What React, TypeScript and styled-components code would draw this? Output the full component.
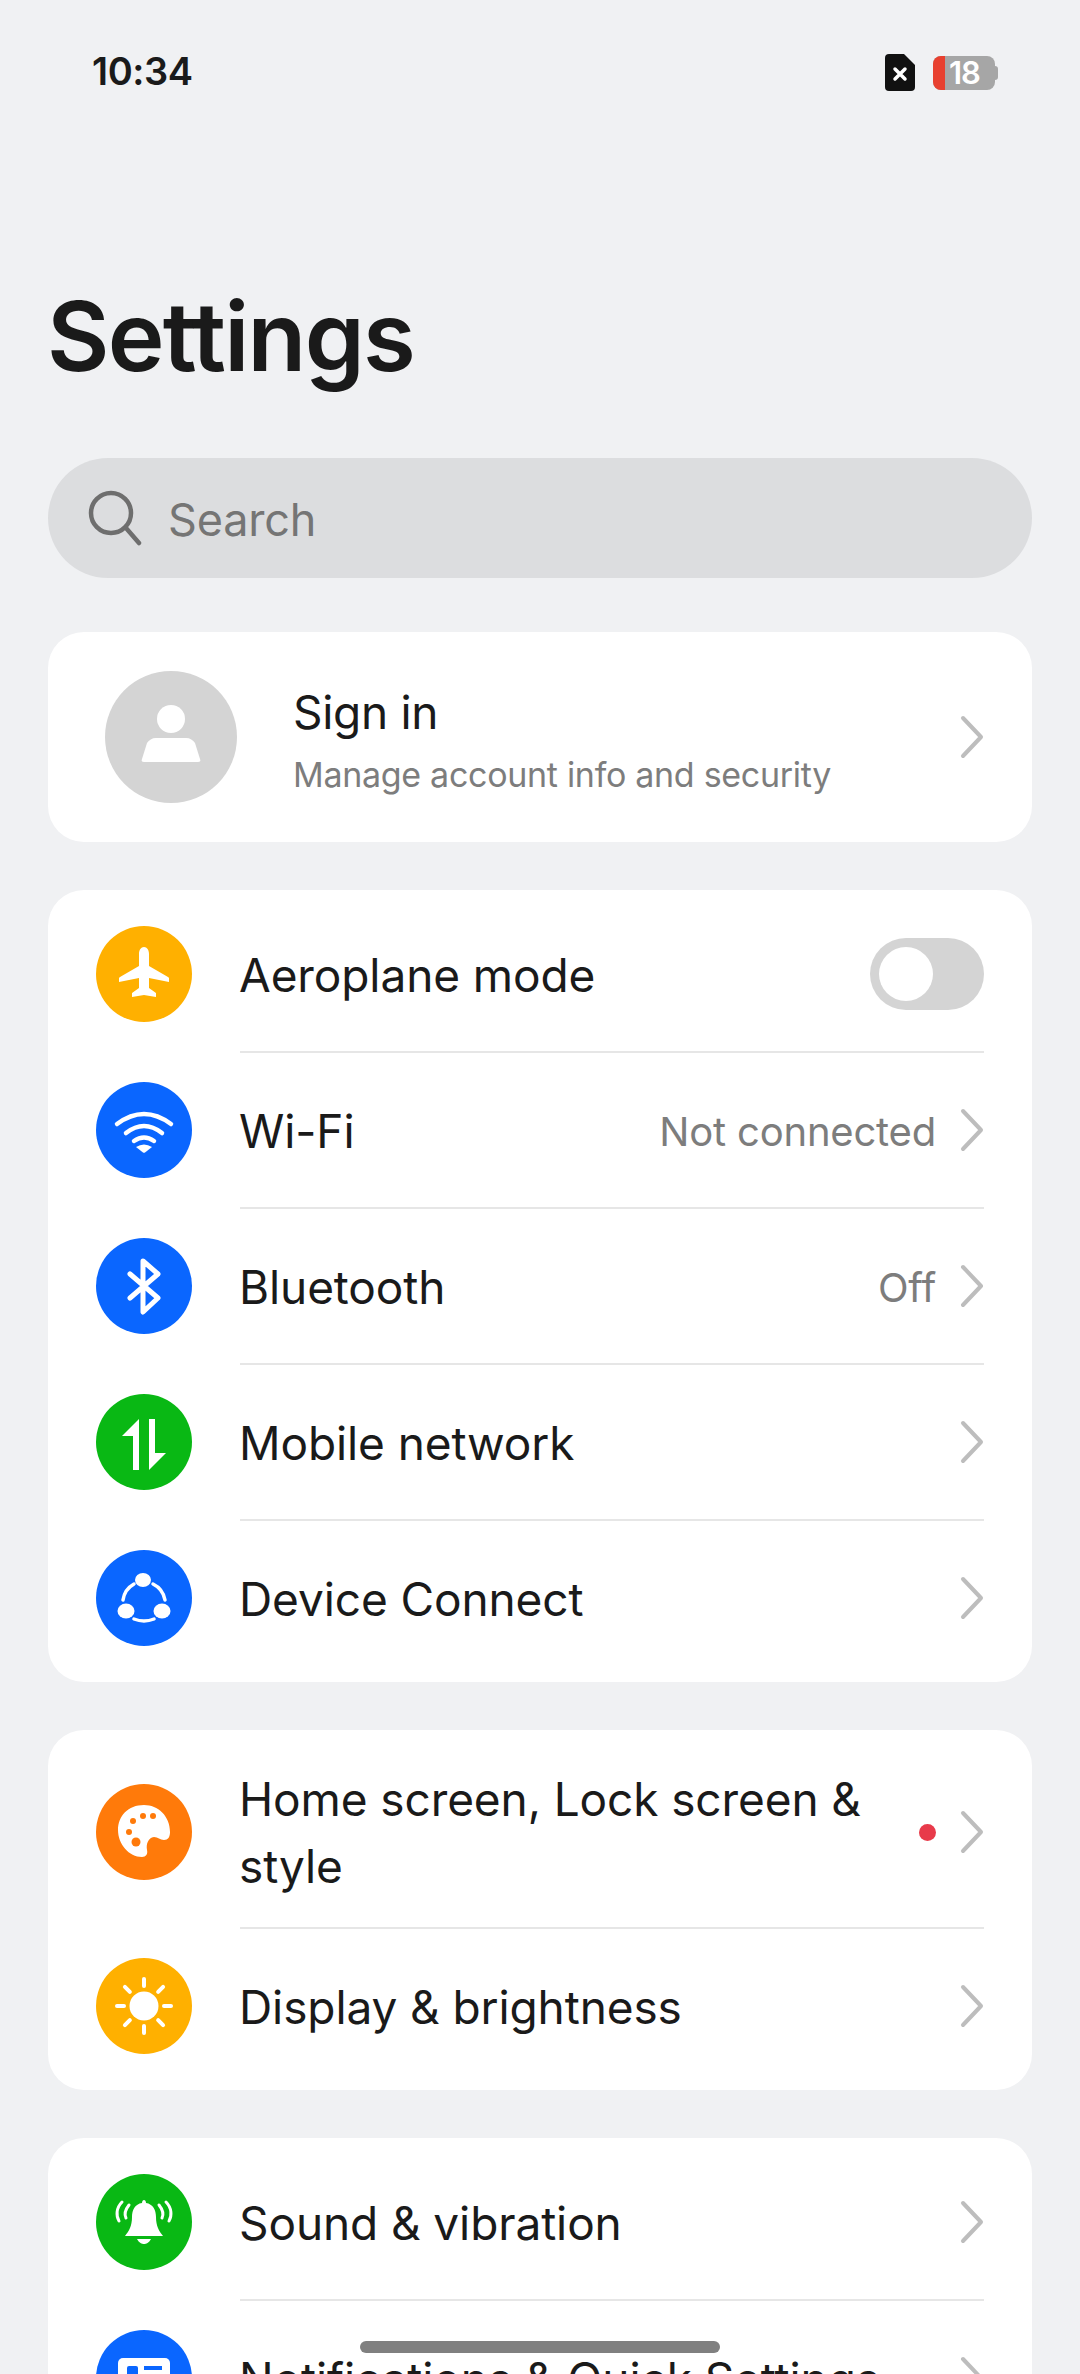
import React from "react"
import styled, { createGlobalStyle } from "styled-components"

const GlobalStyle = createGlobalStyle`
	html, body {
		margin: 0;
		padding: 0;
		background: #f0f1f3;
	}
	* {
		box-sizing: border-box;
	}
`

const Page = styled.div`
	position: relative;
	width: 1080px;
	height: 2374px;
	overflow: hidden;
	padding: 0 48px;
	background: #f0f1f3;
	color: #1a1a1a;
	font-family: Inter, "Liberation Sans", sans-serif;
`

const StatusBar = styled.div`
	display: flex;
	align-items: center;
	justify-content: space-between;
	height: 144px;
	padding: 0 34px 0 44px;
`

const Time = styled.span`
	margin-top: -2px;
	font-size: 38px;
	font-weight: 600;
	letter-spacing: -0.4px;
`

const StatusIcons = styled.div`
	display: flex;
	align-items: center;
	gap: 18px;
`

const BatteryWrap = styled.div`
	display: flex;
	align-items: center;
	margin-top: 2px;
`

const Battery = styled.div`
	display: flex;
	width: 62px;
	height: 34px;
	border-radius: 8px;
	background: #a6a6a6;
`

const BatteryLow = styled.div`
	width: 12px;
	border-radius: 8px 0 0 8px;
	background: #e8402f;
`

const BatteryLevel = styled.span`
	padding-left: 4px;
	font-size: 31px;
	font-weight: 600;
	line-height: 34px;
	letter-spacing: -1px;
	color: #fff;
`

const BatteryTip = styled.div`
	width: 3px;
	height: 14px;
	border-radius: 0 3px 3px 0;
	background: #a6a6a6;
`

const Title = styled.h1`
	margin: 134px 0 0 -1px;
	font-size: 96px;
	font-weight: 600;
	line-height: 116px;
	letter-spacing: -1.7px;
`

const SearchBar = styled.div`
	display: flex;
	align-items: center;
	gap: 24px;
	height: 120px;
	margin-top: 64px;
	padding-left: 40px;
	border-radius: 60px;
	background: #dcdddf;
`

const SearchText = styled.span`
	padding-top: 2px;
	font-size: 45px;
	letter-spacing: -0.2px;
	color: #757575;
`

const Card = styled.div`
	margin-top: 48px;
	padding: 7px 0 5px;
	border-radius: 36px;
	background: #fff;
`

const AccountCard = styled(Card)`
	display: flex;
	align-items: center;
	height: 210px;
	margin-top: 54px;
	padding: 0 48px 0 57px;
`

const Avatar = styled.div`
	display: flex;
	flex: none;
	align-items: center;
	justify-content: center;
	width: 132px;
	height: 132px;
	margin-right: 56px;
	border-radius: 50%;
	background: #d4d4d4;
`

const AccountText = styled.div`
	flex: 1;
	padding-top: 12px;
`

const AccountName = styled.div`
	font-size: 46px;
	font-weight: 430;
	line-height: 62px;
	letter-spacing: -0.3px;
`

const AccountHint = styled.div`
	margin-top: 1px;
	font-size: 34px;
	line-height: 62px;
	letter-spacing: -0.3px;
	color: #7d7d7d;
`

const Row = styled.div`
	display: flex;
	align-items: center;
	padding-left: 48px;
`

const IconCircle = styled.div<{ $color: string }>`
	flex: none;
	width: 96px;
	height: 96px;
	margin: -3px 48px 0 0;
	border-radius: 50%;
	background: ${(props) => props.$color};
`

const RowBody = styled.div<{ $tall?: boolean; $last?: boolean }>`
	display: flex;
	flex: 1;
	align-items: center;
	min-height: ${(props) => (props.$tall ? "192px" : "156px")};
	margin-right: 48px;
	border-bottom: 2px solid ${(props) => (props.$last ? "transparent" : "#e6e6e6")};
`

const Label = styled.div<{ $wrap?: boolean }>`
	flex: 1;
	margin-left: -1px;
	padding-top: 2px;
	font-size: 46px;
	font-weight: 430;
	line-height: 67px;
	letter-spacing: -0.1px;
	${(props) => props.$wrap && "max-width: 650px;"}
`

const Value = styled.span`
	margin-right: 24px;
	padding-top: 2px;
	font-size: 40px;
	letter-spacing: -0.2px;
	color: #7d7d7d;
`

const Dot = styled.span`
	width: 17px;
	height: 17px;
	margin: 0 24px 0 auto;
	border-radius: 50%;
	background: #e83a4a;
`

const Toggle = styled.div`
	display: flex;
	align-items: center;
	width: 114px;
	height: 72px;
	padding-left: 9px;
	border-radius: 36px;
	background: #d4d4d4;
`

const Knob = styled.div`
	width: 54px;
	height: 54px;
	border-radius: 50%;
	background: #fff;
`

const HomeBar = styled.div`
	position: absolute;
	left: 360px;
	top: 2341px;
	width: 360px;
	height: 12px;
	border-radius: 6px;
	background: #808080;
`

const PersonIcon = styled.svg`
	margin-bottom: 6px;
`

const BLUE = "#0a66ff"
const GREEN = "#09b814"
const AMBER = "#ffb000"
const ORANGE = "#ff7a0a"

const Glyph: React.FC<{ children: React.ReactNode }> = ({ children }) => (
	<svg width="96" height="96" viewBox="0 0 96 96" fill="#fff">
		{children}
	</svg>
)

const Chevron = () => (
	<svg width="24" height="44" viewBox="0 0 24 44" fill="none" style={{ flex: "none" }}>
		<path d="M3 3L21 22L3 41" stroke="#bdbdbd" strokeWidth="4" strokeLinecap="round" strokeLinejoin="round" />
	</svg>
)

const line = { fill: "none", stroke: "#fff", strokeLinecap: "round" as const, strokeLinejoin: "round" as const }

const PlaneIcon = () => (
	<Glyph>
		<path d="M48 21c-3 0-5 3-5 7v12L24 51c-1 .6-1 1-1 2v3l20-4v10l-7 5v4l12-2 12 2v-4l-7-5V52l20 4v-3c0-1 0-1.400-1-2L53 40V28c0-4-2-7-5-7z" />
	</Glyph>
)

const WifiIcon = () => (
	<Glyph>
		<g {...line} strokeWidth="4.5">
			<path d="M21 42Q48 22 75 42" />
			<path d="M30 51Q48 37 66 51" />
			<path d="M38 59Q48 52 58 59" />
		</g>
		<path d="M40 65Q48 60 56 65L49 70.500Q48 71.200 47 70.500Z" />
	</Glyph>
)

const BluetoothIcon = () => (
	<Glyph>
		<path {...line} strokeWidth="5" d="M34 36L62 60L47 74V23L62 36L34 60" />
	</Glyph>
)

const NetworkIcon = () => (
	<Glyph>
		<path d="M43 25V76H37V42H26Z" />
		<path d="M53 25H59V59H70L53 76Z" />
	</Glyph>
)

const ConnectIcon = () => (
	<Glyph>
		<ellipse cx="47" cy="30" rx="8" ry="7" />
		<ellipse cx="30" cy="61" rx="8.500" ry="7.500" />
		<ellipse cx="66" cy="61" rx="8.500" ry="7.500" />
		<g {...line} strokeWidth="3.500">
			<path d="M27 50A22 22 0 0 1 38 34" />
			<path d="M69 50A22 22 0 0 0 57 34" />
			<path d="M38 69Q48 73 58 69" />
		</g>
	</Glyph>
)

const PaletteIcon = () => (
	<Glyph>
		<path d="M48 21C32 21 22 32 22 46C22 60 33 73 46 73C50 73 52 70 51 66C50 60 52 54 58 53C62 53 64 56 68 56C72 56 74 53 74 48C74 32 62 21 48 21Z" />
		<g fill={ORANGE}>
			<circle cx="37" cy="37" r="3" />
			<circle cx="47" cy="32" r="3" />
			<circle cx="57" cy="32" r="3" />
			<circle cx="33" cy="48" r="3" />
			<circle cx="40" cy="58" r="4.500" />
		</g>
	</Glyph>
)

const SunIcon = () => (
	<Glyph>
		<circle cx="48" cy="48" r="14.500" />
		<g {...line} strokeWidth="4">
			{[0, 45, 90, 135, 180, 225, 270, 315].map((a) => (
				<path key={a} d="M48 28V21" transform={`rotate(${a} 48 48)`} />
			))}
		</g>
	</Glyph>
)

const BellIcon = () => (
	<Glyph>
		<path d="M48 26C47 26 46 27 46 29C39 30 36 36 36 43C36 52 33 57 29 62H67C63 57 60 52 60 43C60 36 57 30 50 29C50 27 49 26 48 26Z" />
		<path d="M41 65H55C53 69 50 70 48 70C46 70 43 69 41 65Z" />
		<g {...line} strokeWidth="3">
			<path d="M26 28C20 34 20 42 23 47" />
			<path d="M33 31C29 36 28 40 30 44" />
			<path d="M70 28C76 34 76 42 73 47" />
			<path d="M63 31C67 36 68 40 66 44" />
		</g>
	</Glyph>
)

const NotifyIcon = () => (
	<Glyph>
		<rect x="22" y="28" width="52" height="40" rx="5" />
		<rect x="31" y="36" width="11" height="14" rx="2" fill={BLUE} />
		<path d="M48 38H66M48 46H66" stroke={BLUE} strokeWidth="4" />
	</Glyph>
)

interface ISetting {
	label: string
	color: string
	icon: React.ReactNode
	value?: string
	toggle?: boolean
	dot?: boolean
	tall?: boolean
}

const GROUPS: ISetting[][] = [
	[
		{ label: "Aeroplane mode", color: AMBER, icon: <PlaneIcon />, toggle: true },
		{ label: "Wi-Fi", color: BLUE, icon: <WifiIcon />, value: "Not connected" },
		{ label: "Bluetooth", color: BLUE, icon: <BluetoothIcon />, value: "Off" },
		{ label: "Mobile network", color: GREEN, icon: <NetworkIcon /> },
		{ label: "Device Connect", color: BLUE, icon: <ConnectIcon /> },
	],
	[
		{ label: "Home screen, Lock screen & style", color: ORANGE, icon: <PaletteIcon />, dot: true, tall: true },
		{ label: "Display & brightness", color: AMBER, icon: <SunIcon /> },
	],
	[
		{ label: "Sound & vibration", color: GREEN, icon: <BellIcon /> },
		{ label: "Notifications & Quick Settings", color: BLUE, icon: <NotifyIcon /> },
	],
]

const App: React.FC = () => {
	return (
		<Page>
			<GlobalStyle />
			<StatusBar>
				<Time>10:34</Time>
				<StatusIcons>
					<svg width="30" height="37" viewBox="0 0 30 37">
						<path d="M4 0H19L30 11V33a4 4 0 0 1-4 4H4a4 4 0 0 1-4-4V4a4 4 0 0 1 4-4z" fill="#111" />
						<path d="M10 15L20 25M20 15L10 25" stroke="#fff" strokeWidth="3.500" strokeLinecap="round" />
					</svg>
					<BatteryWrap>
						<Battery>
							<BatteryLow />
							<BatteryLevel>18</BatteryLevel>
						</Battery>
						<BatteryTip />
					</BatteryWrap>
				</StatusIcons>
			</StatusBar>
			<Title>Settings</Title>
			<SearchBar>
				<svg width="56" height="56" viewBox="0 0 56 56" fill="none">
					<circle cx="23" cy="23" r="20" stroke="#6e6e6e" strokeWidth="4.500" />
					<path d="M38 38L51 53" stroke="#6e6e6e" strokeWidth="4.500" strokeLinecap="round" />
				</svg>
				<SearchText>Search</SearchText>
			</SearchBar>
			<AccountCard>
				<Avatar>
					<PersonIcon width="62" height="58" viewBox="0 0 62 58" fill="#fff">
						<circle cx="31" cy="14" r="14" />
						<path d="M16 33H46C50 33 53 35 55 38L60 54C61 56 60 57 58 57H4C2 57 1 56 2 54L7 38C9 35 12 33 16 33Z" />
					</PersonIcon>
				</Avatar>
				<AccountText>
					<AccountName>Sign in</AccountName>
					<AccountHint>Manage account info and security</AccountHint>
				</AccountText>
				<Chevron />
			</AccountCard>
			{GROUPS.map((group, g) => (
				<Card key={"group" + g}>
					{group.map((item, i) => (
						<Row key={item.label}>
							<IconCircle $color={item.color}>{item.icon}</IconCircle>
							<RowBody $tall={item.tall} $last={i === group.length - 1}>
								<Label $wrap={item.tall}>{item.label}</Label>
								{item.value && <Value>{item.value}</Value>}
								{item.dot && <Dot />}
								{item.toggle ? (
									<Toggle>
										<Knob />
									</Toggle>
								) : (
									<Chevron />
								)}
							</RowBody>
						</Row>
					))}
				</Card>
			))}
			<HomeBar />
		</Page>
	)
}

export default App
